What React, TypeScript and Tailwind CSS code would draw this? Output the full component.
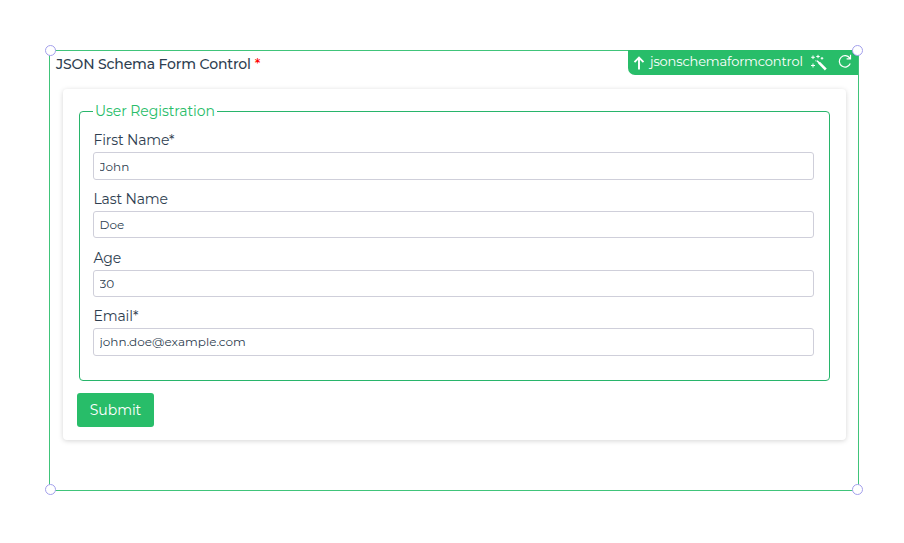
import React from "react";

interface Field {
  label: string;
  value: string;
}

const fields: Field[] = [
  { label: "First Name*", value: "John" },
  { label: "Last Name", value: "Doe" },
  { label: "Age", value: "30" },
  { label: "Email*", value: "john.doe@example.com" },
];

const handles = [
  "-left-[5px] -top-[6px]",
  "-right-[5px] -top-[6px]",
  "-left-[5px] -bottom-[5px]",
  "-right-[5px] -bottom-[5px]",
];

function ControlBadge() {
  return (
    <div className="absolute -top-px right-0 flex h-[25px] w-[230px] items-center rounded-bl-[7px] bg-[#28bd69] text-white">
      <svg className="ml-[5px] mt-px h-[14px] w-[12px] shrink-0" viewBox="0 0 12 14" fill="none" stroke="currentColor" strokeWidth="1.9">
        <path d="M6 13.5V2M1.5 6.2 6 1.6l4.5 4.6" />
      </svg>
      <span className="-mt-[3px] ml-[5px] w-[154px] shrink-0 whitespace-nowrap text-[13px] leading-5 tracking-[-0.15px]">jsonschemaformcontrol</span>
      <svg className="-mt-px ml-[6px] h-[17px] w-[18px] shrink-0" viewBox="0 0 18 17" fill="none" stroke="currentColor">
        <path d="m7 6.7 2.6 2.6" strokeWidth="1.6" />
        <path d="m9 8.7 6.8 6.8" strokeWidth="2.6" />
        <path d="M3 1.5v3.6M1.2 3.3h3.6M8 .8v3.4M6.3 2.5h3.4M12 3v2.6M10.7 4.3h2.6M3 9.5v4M1 11.5h4M5.4 6.8h1" strokeWidth="1" />
      </svg>
      <svg className="-mt-[3px] ml-[10px] h-[14px] w-[14px] shrink-0" viewBox="0 0 14 14" fill="none" stroke="currentColor" strokeWidth="1.2">
        <path d="M12.3 9.6A5.7 5.7 0 1 1 11.8 4.2M12.5.8v4H8.6" />
      </svg>
    </div>
  );
}

export default function App() {
  return (
    <main className="h-[543px] w-[904px] overflow-hidden bg-white pl-[49px] pt-[50px] font-[Montserrat,Inter,sans-serif] text-[#2e3e50]">
      <section className="relative h-[441px] w-[810px] border border-[#40c47a]">
        <h1 className="ml-[6px] mt-[3px] h-5 whitespace-nowrap text-[14px] font-medium leading-5">
          <span className="tracking-[-0.15px]">JSON Schema Form Control</span>
          <span className="ml-1 text-[#ff0000]">*</span>
        </h1>
        <ControlBadge />
        <form
          className="ml-[13px] mt-[15px] h-[351px] w-[783px] rounded-[4px] bg-white pl-4 pt-[12px] shadow-[0_1px_5px_rgba(0,0,0,0.17)]"
          onSubmit={(e) => e.preventDefault()}
        >
          <fieldset className="h-[280px] w-[751px] rounded-[4px] border border-[#28b56b] px-[13px]">
            <legend className="h-[21px] whitespace-nowrap px-[2px] text-[14px] leading-[21px] tracking-[-0.07px] text-[#28bd69]">
              User Registration
            </legend>
            <div className="flex flex-col gap-[9.1px] pt-[8.4px]">
              {fields.map((field) => (
                <label key={field.label} className="block h-[49.5px]">
                  <span className="block h-[22px] pl-[0.5px] text-[14px] leading-[21px] tracking-[-0.15px]">{field.label}</span>
                  <input
                    className="block h-[27.4px] w-[721px] rounded-[3px] border border-[#cfcfda] bg-white px-[5.5px] pt-[0.2px] text-[12px] tracking-[0.03px]"
                    defaultValue={field.value}
                  />
                </label>
              ))}
            </div>
          </fieldset>
          <button className="-ml-[2px] mt-[12px] h-[34px] w-[77px] rounded-[3px] bg-[#28bd69] text-[14px] tracking-[-0.05px] text-white">
            Submit
          </button>
        </form>
        {handles.map((position) => (
          <span key={position} className={`absolute h-[11px] w-[11px] rounded-full border border-[#a3a0ec] bg-white ${position}`} />
        ))}
      </section>
    </main>
  );
}
